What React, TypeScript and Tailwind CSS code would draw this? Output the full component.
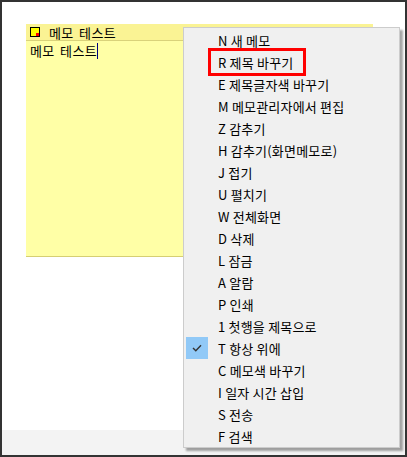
import React from 'react';

const items: { key: string; label: string; checked?: boolean }[] = [
  { key: 'N', label: '새 메모' },
  { key: 'R', label: '제목 바꾸기' },
  { key: 'E', label: '제목글자색 바꾸기' },
  { key: 'M', label: '메모관리자에서 편집' },
  { key: 'Z', label: '감추기' },
  { key: 'H', label: '감추기(화면메모로)' },
  { key: 'J', label: '접기' },
  { key: 'U', label: '펼치기' },
  { key: 'W', label: '전체화면' },
  { key: 'D', label: '삭제' },
  { key: 'L', label: '잠금' },
  { key: 'A', label: '알람' },
  { key: 'P', label: '인쇄' },
  { key: '1', label: '첫행을 제목으로' },
  { key: 'T', label: '항상 위에', checked: true },
  { key: 'C', label: '메모색 바꾸기' },
  { key: 'I', label: '일자 시간 삽입' },
  { key: 'S', label: '전송' },
  { key: 'F', label: '검색' },
];

const font = { fontFamily: '"Noto Sans CJK KR", "Noto Sans", sans-serif' };

const App: React.FC = () => {
  return (
    <div
      className="relative w-[407px] h-[457px] border-2 border-[#333333] bg-white flex flex-col overflow-hidden"
      style={font}
    >
      {/* memo window */}
      <div className="flex-1 pl-[24px] pt-[22px]">
        <div className="w-[347px] h-[233px] flex flex-col bg-[#ffffa6] border-b border-[#d6cf73]">
          <div className="h-[17px] flex items-center gap-[9px] pl-[4px] bg-[#faf394] border-b border-[#d9d27a]">
            <div className="relative w-[10px] h-[10px] border border-black bg-[#ffff00]">
              <div className="absolute right-0 bottom-0 w-[3px] h-[3px] bg-[#ff0000]" />
            </div>
            <span className="text-[13px] tracking-[0.4px] [word-spacing:2px] leading-none text-black">메모 테스트</span>
          </div>
          <div className="flex items-center pl-[4px] pt-[2px] h-[17px]">
            <span className="text-[13px] tracking-[0.4px] [word-spacing:2px] leading-none text-black">메모 테스트</span>
            <span className="w-px h-[16px] bg-[#000080]" />
          </div>
        </div>
      </div>
      {/* bottom strip */}
      <div className="h-[25px] bg-[#f3f3f3]" />

      {/* context menu */}
      <div className="absolute left-[181px] top-[25px] w-[217px] bg-[#f0f0f0] border border-[#cccccc] pt-px shadow-[3px_3px_2px_rgba(0,0,0,0.35)]">
        {items.map((it) => (
          <div key={it.key} className="relative h-[22px] flex items-center">
            {it.checked && (
              <div className="absolute left-[2px] top-0 w-[22px] h-[22px] bg-[#91c9f7] flex items-center justify-center">
                <svg width="10" height="8" viewBox="0 0 10 8" fill="none">
                  <path d="M1 4 L3.8 6.8 L9 1.2" stroke="#333333" strokeWidth="1.4" />
                </svg>
              </div>
            )}
            <span className="pl-[34px] text-[13px] tracking-[0.2px] leading-none text-black whitespace-nowrap">
              {it.key} {it.label}
            </span>
          </div>
        ))}
        {/* red annotation box */}
        <div className="absolute left-[24px] top-[20px] w-[98px] h-[28px] border-[3px] border-[#ff0000]" />
      </div>
    </div>
  );
};

export default App;
